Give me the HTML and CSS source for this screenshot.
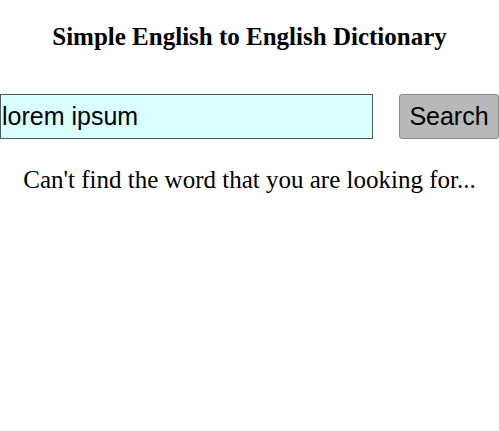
FILE: index.html
```html
<!DOCTYPE html>
<html>
<head>
<meta charset="utf-8">
<link rel="stylesheet" href="styles.css">
</head>
<body>
<div class="page">
  <h1 class="title">Simple English to English Dictionary</h1>
  <div class="search-row">
    <input class="search-input" type="text" value="lorem ipsum">
    <button class="search-btn">Search</button>
  </div>
  <p class="message">Can't find the word that you are looking for...</p>
</div>
</body>
</html>
```
FILE: styles.css
```css
html, body {
  margin: 0;
  padding: 0;
  background: #ffffff;
}
.page {
  width: 499px;
  font-family: "Liberation Serif", "Times New Roman", serif;
  color: #000;
}
.title {
  margin: 0;
  padding-top: 24px;
  font-size: 25px;
  font-weight: bold;
  text-align: center;
  line-height: 26px;
}
.search-row {
  display: flex;
  align-items: center;
  gap: 26px;
  margin-top: 44px;
}
.search-input {
  box-sizing: border-box;
  width: 373px;
  height: 45px;
  margin: 0;
  padding: 0 1px;
  border: 1px solid #4a5a5a;
  background: #d9ffff;
  font-family: "Liberation Sans", Arial, sans-serif;
  font-size: 25px;
  color: #000;
  outline: none;
}
.search-btn {
  box-sizing: border-box;
  width: 100px;
  height: 45px;
  margin: 0;
  padding: 0;
  border: 1px solid #8a8a8a;
  border-radius: 3px;
  background: #b8b8b8;
  font-family: "Liberation Sans", Arial, sans-serif;
  font-size: 25px;
  color: #000;
}
.message {
  margin: 27px 0 0;
  font-size: 25px;
  line-height: 28px;
  text-align: center;
}
```
